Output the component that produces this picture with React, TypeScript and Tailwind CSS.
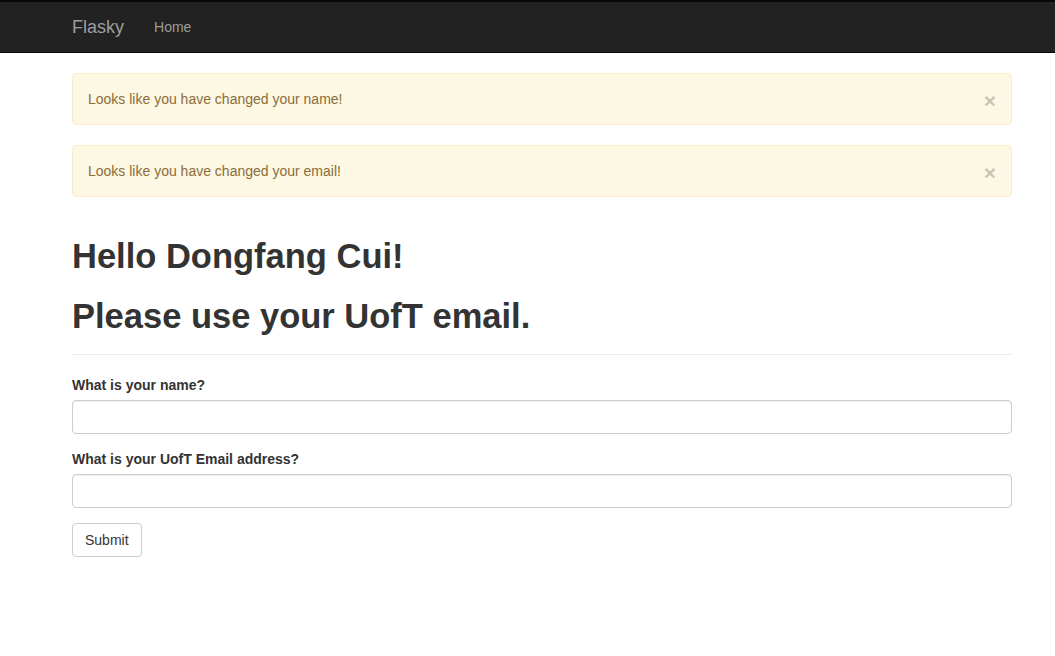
export default function App() {
  const alerts = ["Looks like you have changed your name!", "Looks like you have changed your email!"];

  return (
    <div className="min-h-[656px] bg-white font-['Liberation_Sans',Arial,sans-serif] text-[14px] leading-[20px] text-[#333]">
      {/* Navbar */}
      <nav className="h-[53px] border-b border-t-2 border-[#080808] bg-[#222]">
        <div className="ml-[72px] flex w-[940px] items-center">
          <a href="#" className="py-[15px] pr-[15px] text-[18px] leading-[20px] text-[#9d9d9d]">
            Flasky
          </a>
          <a href="#" className="px-[15px] py-[15px] text-[14px] leading-[20px] text-[#9d9d9d]">
            Home
          </a>
        </div>
      </nav>

      <div className="ml-[72px] w-[940px] pt-[20px]">
        {/* Flash messages */}
        {alerts.map((msg) => (
          <div
            key={msg}
            className="mb-[20px] flex items-start justify-between rounded-[4px] border border-[#faebcc] bg-[#fcf8e3] py-[15px] pl-[15px] pr-[15px] text-[#8a6d3b]"
          >
            <span>{msg}</span>
            <button className="relative top-[2px] text-[21px] font-bold leading-[20px] text-black opacity-20">
              ×
            </button>
          </div>
        ))}

        {/* Page header */}
        <div className="mb-[20px] mt-[40px] border-b border-[#eee] pb-[8px]">
          <h1 className="mb-[10px] text-[34.5px] font-bold leading-[39.6px]">Hello Dongfang Cui!</h1>
          <h1 className="mb-[10px] mt-[20px] text-[34.5px] font-bold leading-[39.6px]">Please use your UofT email.</h1>
        </div>

        {/* Form */}
        <form onSubmit={(e) => e.preventDefault()}>
          <div className="mb-[15px]">
            <label className="mb-[5px] block font-bold">What is your name?</label>
            <input
              type="text"
              className="block h-[34px] w-full rounded-[4px] border border-[#ccc] px-[12px] py-[6px] shadow-[inset_0_1px_1px_rgba(0,0,0,0.075)] outline-none"
            />
          </div>
          <div className="mb-[15px]">
            <label className="mb-[5px] block font-bold">What is your UofT Email address?</label>
            <input
              type="text"
              className="block h-[34px] w-full rounded-[4px] border border-[#ccc] px-[12px] py-[6px] shadow-[inset_0_1px_1px_rgba(0,0,0,0.075)] outline-none"
            />
          </div>
          <button
            type="submit"
            className="h-[34px] rounded-[4px] border border-[#ccc] bg-white px-[12px] py-[6px] text-[14px] leading-[20px] text-[#333]"
          >
            Submit
          </button>
        </form>
      </div>
    </div>
  );
}
